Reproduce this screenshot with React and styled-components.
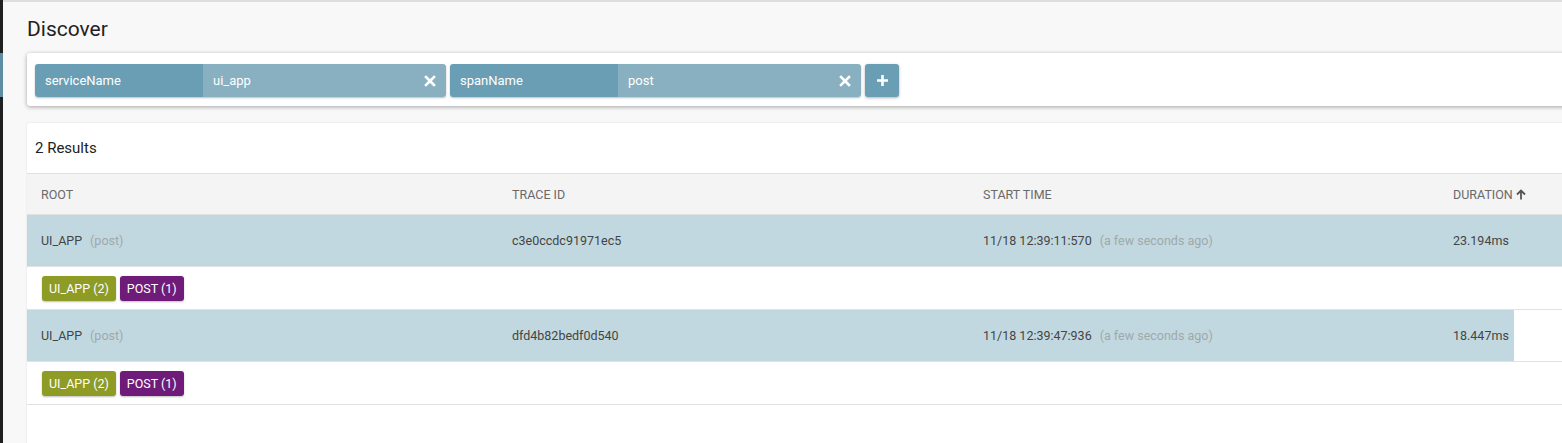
import React from 'react';
import styled, { createGlobalStyle } from 'styled-components';

const GlobalStyle = createGlobalStyle`
  html, body {
    margin: 0;
    padding: 0;
    overflow: hidden;
    background: #f8f8f8;
  }
  body {
    font-family: Roboto, "Liberation Sans", sans-serif;
    color: #222;
  }
`;

const AppWrapper = styled.div`
  display: flex;
  width: 100vw;
  height: 100vh;
  overflow: hidden;
`;

const Sidebar = styled.div`
  width: 3px;
  flex-shrink: 0;
  background: #202020;
  display: flex;
  flex-direction: column;
  padding-top: 53px;
`;

const SidebarMarker = styled.div`
  height: 44px;
  background: #5f8ea2;
`;

const Main = styled.div`
  flex: 1;
  border-top: 2px solid #dedede;
  padding: 15px 0 0 24px;
  min-width: 0;
`;

const Title = styled.h1`
  margin: 0 0 12px;
  font-size: 21px;
  line-height: 24px;
  font-weight: 400;
  color: #222;
`;

const SearchCard = styled.div`
  width: 1870px;
  background: #fff;
  border-radius: 3px;
  box-shadow: 0 1px 4px rgba(0, 0, 0, 0.35);
  padding: 11px 8px 9px;
  box-sizing: border-box;
  display: flex;
  gap: 4px;
`;

const Chip = styled.div`
  display: flex;
  height: 33px;
  border-radius: 3px;
  overflow: hidden;
  box-shadow: 0 1px 2px rgba(0, 0, 0, 0.25);
  font-size: 13px;
  color: #fff;
`;

const ChipKey = styled.div`
  width: 168px;
  background: #6a9eb4;
  display: flex;
  align-items: center;
  padding-left: 10px;
  box-sizing: border-box;
`;

const ChipValue = styled.div`
  width: 243px;
  background: #88b0c1;
  display: flex;
  align-items: center;
  justify-content: space-between;
  padding: 0 10px 0 10px;
  box-sizing: border-box;
`;

const IconButton = styled.div`
  width: 34px;
  height: 33px;
  border-radius: 3px;
  background: #6a9eb4;
  box-shadow: 0 1px 3px rgba(0, 0, 0, 0.3);
  display: flex;
  align-items: center;
  justify-content: center;
`;

const ResultsCard = styled.div`
  width: 1870px;
  margin-top: 17px;
  background: #fff;
  border-radius: 3px 3px 0 0;
  box-shadow: 0 0 2px rgba(0, 0, 0, 0.12);
  min-height: 330px;
`;

const ResultsHeader = styled.div`
  height: 50px;
  display: flex;
  align-items: center;
  padding-left: 8px;
  font-size: 15px;
  color: #222;
  border-bottom: 1px solid #e0e0e0;
`;

const Row = styled.div`
  display: grid;
  grid-template-columns: 471px 471px 470px 1fr;
  align-items: center;
  padding-left: 14px;
  font-size: 12.5px;
  border-bottom: 1px solid #e2e2e2;
`;

const HeadRow = styled(Row)`
  height: 40px;
  background: #f4f4f4;
  color: #6a6a6a;
  text-transform: uppercase;
`;

const TraceRow = styled(Row)`
  height: 51px;
  color: #444;
  background: linear-gradient(
    to right,
    #c2d8e0 ${(p) => p.$pct}%,
    #fff ${(p) => p.$pct}%
  );
`;

const Muted = styled.span`
  color: #9fa8ab;
  margin-left: 8px;
`;

const HeadCell = styled.div`
  display: flex;
  align-items: center;
  gap: 3px;
`;

const TagRow = styled.div`
  height: 42px;
  display: flex;
  align-items: center;
  gap: 4px;
  padding-left: 15px;
  border-bottom: 1px solid #e2e2e2;
`;

const Tag = styled.span`
  height: 25px;
  display: inline-flex;
  align-items: center;
  padding: 0 7px;
  border-radius: 3px;
  font-size: 12.5px;
  color: #fff;
  background: ${(p) => p.$color};
  box-shadow: 0 1px 2px rgba(0, 0, 0, 0.25);
`;

const CloseIcon = () => (
  <svg width="12" height="12" viewBox="0 0 12 12">
    <path d="M2 2 L10 10 M10 2 L2 10" stroke="#fff" strokeWidth="2.6" strokeLinecap="square" />
  </svg>
);

const PlusIcon = () => (
  <svg width="13" height="13" viewBox="0 0 13 13">
    <path d="M6.5 1 V12 M1 6.5 H12" stroke="#fff" strokeWidth="2.6" />
  </svg>
);

const ArrowUp = () => (
  <svg width="10" height="11" viewBox="0 0 10 11">
    <path d="M5 10.5 V2 M1 5.5 L5 1.5 L9 5.5" stroke="#555" strokeWidth="1.8" fill="none" />
  </svg>
);

const filters = [
  { key: 'serviceName', value: 'ui_app' },
  { key: 'spanName', value: 'post' },
];

const traces = [
  { root: 'UI_APP', span: 'post', id: 'c3e0ccdc91971ec5', start: '11/18 12:39:11:570', ago: 'a few seconds ago', duration: 23.194 },
  { root: 'UI_APP', span: 'post', id: 'dfd4b82bedf0d540', start: '11/18 12:39:47:936', ago: 'a few seconds ago', duration: 18.447 },
];

const tags = [
  { label: 'UI_APP (2)', color: '#8e9b25' },
  { label: 'POST (1)', color: '#6f1b79' },
];

export default function App() {
  const max = Math.max(...traces.map((t) => t.duration));
  return (
    <AppWrapper>
      <GlobalStyle />
      <Sidebar>
        <SidebarMarker />
      </Sidebar>
      <Main>
        <Title>Discover</Title>
        <SearchCard>
          {filters.map((f) => (
            <Chip key={f.key}>
              <ChipKey>{f.key}</ChipKey>
              <ChipValue>
                {f.value}
                <CloseIcon />
              </ChipValue>
            </Chip>
          ))}
          <IconButton>
            <PlusIcon />
          </IconButton>
        </SearchCard>

        <ResultsCard>
          <ResultsHeader>2 Results</ResultsHeader>
          <HeadRow>
            <HeadCell>Root</HeadCell>
            <HeadCell>Trace ID</HeadCell>
            <HeadCell>Start Time</HeadCell>
            <HeadCell>
              Duration <ArrowUp />
            </HeadCell>
          </HeadRow>
          {traces.map((t) => (
            <React.Fragment key={t.id}>
              <TraceRow $pct={(t.duration / max) * 100}>
                <div>
                  {t.root}
                  <Muted>({t.span})</Muted>
                </div>
                <div>{t.id}</div>
                <div>
                  {t.start}
                  <Muted>({t.ago})</Muted>
                </div>
                <div>{t.duration.toFixed(3)}ms</div>
              </TraceRow>
              <TagRow>
                {tags.map((tg) => (
                  <Tag key={tg.label} $color={tg.color}>
                    {tg.label}
                  </Tag>
                ))}
              </TagRow>
            </React.Fragment>
          ))}
        </ResultsCard>
      </Main>
    </AppWrapper>
  );
}
